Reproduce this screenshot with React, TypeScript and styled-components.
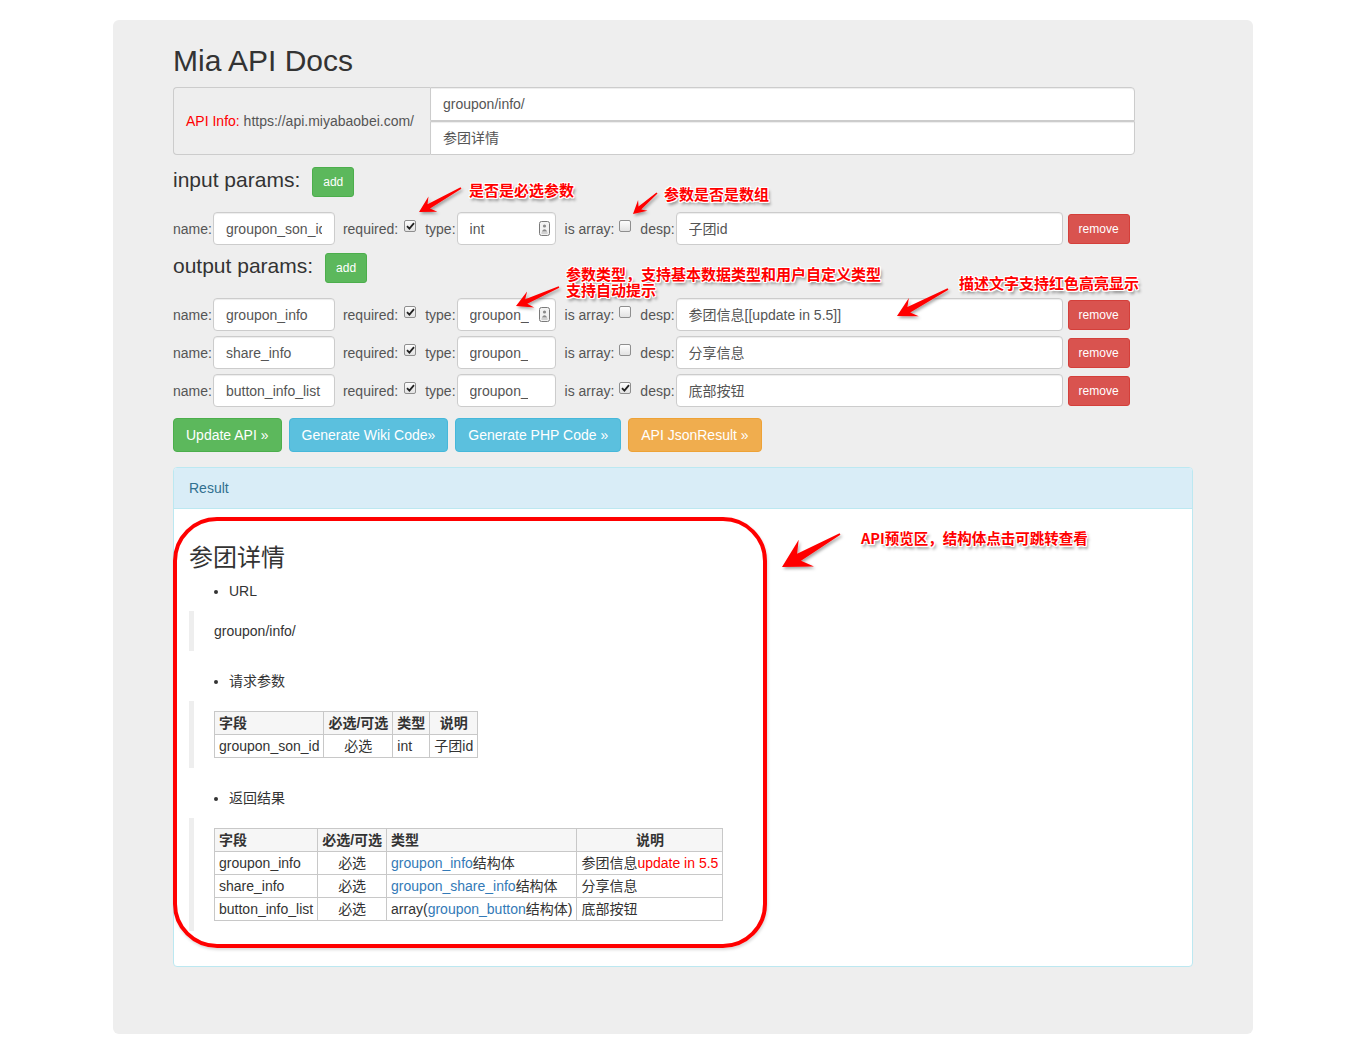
import React from "react";
import styled, { createGlobalStyle } from "styled-components";

const FONT = `"Liberation Sans", Arial, "Noto Sans CJK SC", sans-serif`;
const CJK_BOLD = `"Noto Sans CJK SC", "Liberation Sans", sans-serif`;

const GlobalStyle = createGlobalStyle`
  * { box-sizing: border-box; }
  html, body { margin: 0; padding: 0; background: #fff; }
  body {
    font-family: ${FONT};
    font-size: 14px;
    line-height: 20px;
    color: #333;
  }
`;

const Page = styled.div`
  padding: 20px 0 31px;
`;

const Jumbotron = styled.div`
  position: relative;
  width: 1140px;
  margin: 0 auto;
  padding: 24px 60px 47px;
  background: #eee;
  border-radius: 6px;
`;

const Title = styled.h1`
  margin: 0 0 10px;
  font-size: 30px;
  line-height: 33px;
  font-weight: 400;
  color: #333;
`;

const InfoGroup = styled.div`
  display: flex;
  width: 962px;
`;

const InfoAddon = styled.div`
  width: 257px;
  display: flex;
  align-items: center;
  padding: 6px 12px;
  background: #eee;
  border: 1px solid #ccc;
  border-right: 0;
  border-radius: 4px 0 0 4px;
  color: #555;
  white-space: nowrap;
`;

const Red = styled.span`
  color: #f00;
`;

const InfoFields = styled.div`
  flex: 1;
  display: flex;
  flex-direction: column;
`;

const InfoField = styled.div<{ $pos: "top" | "bottom" }>`
  height: 34px;
  padding: 6px 12px;
  background: #fff;
  border: 1px solid #ccc;
  color: #555;
  box-shadow: inset 0 1px 1px rgba(0, 0, 0, 0.075);
  border-radius: ${(p) => (p.$pos === "top" ? "0 4px 0 0" : "0 0 4px 0")};
`;

const SectionHead = styled.div<{ $top: number }>`
  display: flex;
  align-items: flex-start;
  margin-top: ${(p) => p.$top}px;
`;

const SectionTitle = styled.h3`
  margin: 0 12px 0 0;
  font-size: 21px;
  line-height: 26px;
  font-weight: 400;
  color: #333;
`;

const variants = {
  success: ["#5cb85c", "#4cae4c"],
  info: ["#5bc0de", "#46b8da"],
  warning: ["#f0ad4e", "#eea236"],
  danger: ["#d9534f", "#d43f3a"],
} as const;

type Variant = keyof typeof variants;

const Btn = styled.button<{ $variant: Variant; $sm?: boolean; $ml?: number }>`
  font-family: ${FONT};
  color: #fff;
  background: ${(p) => variants[p.$variant][0]};
  border: 1px solid ${(p) => variants[p.$variant][1]};
  border-radius: ${(p) => (p.$sm ? "3px" : "4px")};
  padding: ${(p) => (p.$sm ? "5px 10px" : "6px 12px")};
  font-size: ${(p) => (p.$sm ? "12px" : "14px")};
  line-height: ${(p) => (p.$sm ? "18px" : "20px")};
  margin-left: ${(p) => p.$ml ?? 0}px;
  white-space: nowrap;
  cursor: pointer;
`;

const ParamRows = styled.div<{ $top: number }>`
  display: flex;
  flex-direction: column;
  gap: 5px;
  margin-top: ${(p) => p.$top}px;
`;

const Row = styled.div`
  display: flex;
  align-items: center;
  height: 33px;
`;

const Label = styled.span<{ $ml?: number }>`
  color: #555;
  margin-left: ${(p) => p.$ml ?? 0}px;
  margin-right: 1px;
  white-space: nowrap;
`;

const Field = styled.div<{ $w: number; $pr?: number }>`
  width: ${(p) => p.$w}px;
  height: 33px;
  display: flex;
  align-items: center;
  padding: 0 ${(p) => p.$pr ?? 12}px 0 12px;
  background: #fff;
  border: 1px solid #ccc;
  border-radius: 4px;
  color: #555;
  box-shadow: inset 0 1px 1px rgba(0, 0, 0, 0.075);
`;

const FieldText = styled.span<{ $mr?: number }>`
  flex: 1;
  min-width: 0;
  overflow: hidden;
  white-space: nowrap;
  margin-right: ${(p) => p.$mr ?? 0}px;
`;

const Check = styled.span<{ $ml: number }>`
  width: 12px;
  height: 12px;
  flex: none;
  margin-left: ${(p) => p.$ml}px;
  margin-bottom: 5px;
  border: 1px solid #8e8e8e;
  border-radius: 2px;
  background: linear-gradient(#fdfdfd, #e2e2e2);
  display: inline-flex;
  align-items: center;
  justify-content: center;
`;

const ActionBar = styled.div`
  display: flex;
  gap: 7px;
  margin-top: 11px;
`;

const Panel = styled.div`
  margin-top: 15px;
  margin-bottom: 20px;
  background: #fff;
  border: 1px solid #bce8f1;
  border-radius: 4px;
`;

const PanelHeading = styled.div`
  padding: 10px 15px;
  background: #d9edf7;
  color: #31708f;
  border-bottom: 1px solid #bce8f1;
  border-radius: 3px 3px 0 0;
`;

const PanelBody = styled.div`
  padding: 15px;
`;

const DocTitle = styled.h2`
  margin: 20px 0 10px;
  font-size: 24px;
  line-height: 27px;
  font-weight: 400;
  color: #333;
`;

const BulletList = styled.ul`
  margin: 0 0 10px;
  padding-left: 40px;
  list-style: disc;
`;

const Quote = styled.blockquote`
  margin: 0 0 20px;
  padding: 10px 20px;
  border-left: 5px solid #eee;
`;

const Table = styled.table`
  border-collapse: collapse;
  border-spacing: 0;
`;

const Th = styled.th<{ $center?: boolean }>`
  padding: 1px 4px;
  border: 1px solid #c8c8c8;
  background: #f6f6f6;
  font-weight: 700;
  text-align: ${(p) => (p.$center ? "center" : "left")};
  white-space: nowrap;
`;

const Td = styled.td<{ $center?: boolean }>`
  padding: 1px 4px;
  border: 1px solid #c8c8c8;
  text-align: ${(p) => (p.$center ? "center" : "left")};
  white-space: nowrap;
`;

const Link = styled.a`
  color: #337ab7;
  text-decoration: none;
`;

const Hot = styled.span`
  color: #f00;
`;

/* ---------- annotation overlay ---------- */

const Overlay = styled.div`
  position: absolute;
  inset: 0;
  pointer-events: none;
`;

const ArrowLayer = styled.svg`
  position: absolute;
  left: 0;
  top: 0;
  width: 100%;
  height: 100%;
  overflow: visible;
`;

const Note = styled.div<{ $x: number; $y: number; $size?: number }>`
  position: absolute;
  left: ${(p) => p.$x}px;
  top: ${(p) => p.$y}px;
  font-family: ${CJK_BOLD};
  font-weight: 700;
  font-size: ${(p) => p.$size ?? 15}px;
  line-height: 16px;
  color: #f00;
  white-space: nowrap;
  text-shadow: -1px -1px 0 #fff, 1px -1px 0 #fff, -1px 1px 0 #fff, 1px 1px 0 #fff,
    0 -1px 0 #fff, 0 1px 0 #fff, -1px 0 0 #fff, 1px 0 0 #fff,
    2px 3px 3px rgba(0, 0, 0, 0.45);
`;

const Frame = styled.div`
  position: absolute;
  left: 60px;
  top: 497px;
  width: 594px;
  height: 431px;
  border: 4px solid #f00;
  border-radius: 44px;
  box-shadow: 1px 2px 3px rgba(0, 0, 0, 0.15);
`;

type Pt = [number, number];

function arrowPoints(tail: Pt, tip: Pt, head: number, shaft: number): string {
  const dx = tip[0] - tail[0];
  const dy = tip[1] - tail[1];
  const len = Math.hypot(dx, dy);
  const ux = dx / len;
  const uy = dy / len;
  const nx = -uy;
  const ny = ux;
  const bx = tip[0] - ux * head;
  const by = tip[1] - uy * head;
  const jx = tip[0] - ux * head * 0.7;
  const jy = tip[1] - uy * head * 0.7;
  const hw = head * 0.55;
  const sw = shaft / 2;
  const tw = 0.8;
  const pts: Pt[] = [
    [tail[0] + nx * tw, tail[1] + ny * tw],
    [jx + nx * sw, jy + ny * sw],
    [bx + nx * hw, by + ny * hw],
    tip,
    [bx - nx * hw, by - ny * hw],
    [jx - nx * sw, jy - ny * sw],
    [tail[0] - nx * tw, tail[1] - ny * tw],
  ];
  return pts.map((p) => `${p[0].toFixed(1)},${p[1].toFixed(1)}`).join(" ");
}

const arrows: { tail: Pt; tip: Pt; head: number; shaft: number }[] = [
  { tail: [348, 168], tip: [306, 192], head: 16, shaft: 5 },
  { tail: [544, 173], tip: [520, 194], head: 13, shaft: 4 },
  { tail: [446, 267], tip: [403, 286], head: 16, shaft: 5 },
  { tail: [835, 269], tip: [784, 296], head: 19, shaft: 6 },
  { tail: [727, 514], tip: [669, 547], head: 28, shaft: 8 },
];

/* ---------- small drawings ---------- */

const CheckMark = () => (
  <svg width="9" height="8" viewBox="0 0 9 8">
    <path d="M1 4.2 L3.4 6.6 L8 1.2" fill="none" stroke="#222" strokeWidth="1.8" />
  </svg>
);

const AutoIcon = () => (
  <svg width="11" height="15" viewBox="0 0 11 15">
    <rect x="0.5" y="0.5" width="10" height="14" rx="2" fill="#f2f2f2" stroke="#7a7a7a" />
    <circle cx="5.5" cy="5" r="1.6" fill="#8a8a8a" />
    <path d="M2.8 10.5 Q5.5 6 8.2 10.5 Z" fill="#8a8a8a" />
    <rect x="2.5" y="11.5" width="6" height="1" fill="#b0b0b0" />
  </svg>
);

/* ---------- data ---------- */

type Param = {
  name: string;
  required: boolean;
  type: string;
  auto?: boolean;
  array: boolean;
  desp: string;
};

const inputParams: Param[] = [
  { name: "groupon_son_id", required: true, type: "int", auto: true, array: false, desp: "子团id" },
];

const outputParams: Param[] = [
  { name: "groupon_info", required: true, type: "groupon_info", auto: true, array: false, desp: "参团信息[[update in 5.5]]" },
  { name: "share_info", required: true, type: "groupon_share_info", array: false, desp: "分享信息" },
  { name: "button_info_list", required: true, type: "groupon_button", array: true, desp: "底部按钮" },
];

const ParamRow = ({ p }: { p: Param }) => (
  <Row>
    <Label>name:</Label>
    <Field $w={122}>
      <FieldText>{p.name}</FieldText>
    </Field>
    <Label $ml={8}>required:</Label>
    <Check $ml={5}>{p.required && <CheckMark />}</Check>
    <Label $ml={9}>type:</Label>
    <Field $w={99} $pr={p.auto ? 5 : 27}>
      <FieldText $mr={p.auto ? 10 : 0}>{p.type}</FieldText>
      {p.auto && <AutoIcon />}
    </Field>
    <Label $ml={9}>is array:</Label>
    <Check $ml={4}>{p.array && <CheckMark />}</Check>
    <Label $ml={9}>desp:</Label>
    <Field $w={387}>
      <FieldText>{p.desp}</FieldText>
    </Field>
    <Btn $variant="danger" $sm $ml={5}>remove</Btn>
  </Row>
);

export default function App() {
  return (
    <>
      <GlobalStyle />
      <Page>
        <Jumbotron>
          <Title>Mia API Docs</Title>
          <InfoGroup>
            <InfoAddon>
              <Red>API Info:</Red>&nbsp;https://api.miyabaobei.com/
            </InfoAddon>
            <InfoFields>
              <InfoField $pos="top">groupon/info/</InfoField>
              <InfoField $pos="bottom">参团详情</InfoField>
            </InfoFields>
          </InfoGroup>

          <SectionHead $top={12}>
            <SectionTitle>input params:</SectionTitle>
            <Btn $variant="success" $sm>add</Btn>
          </SectionHead>
          <ParamRows $top={15}>
            {inputParams.map((p) => (
              <ParamRow key={p.name} p={p} />
            ))}
          </ParamRows>

          <SectionHead $top={8}>
            <SectionTitle>output params:</SectionTitle>
            <Btn $variant="success" $sm>add</Btn>
          </SectionHead>
          <ParamRows $top={15}>
            {outputParams.map((p) => (
              <ParamRow key={p.name} p={p} />
            ))}
          </ParamRows>

          <ActionBar>
            <Btn $variant="success">Update API »</Btn>
            <Btn $variant="info">Generate Wiki Code»</Btn>
            <Btn $variant="info">Generate PHP Code »</Btn>
            <Btn $variant="warning">API JsonResult »</Btn>
          </ActionBar>

          <Panel>
            <PanelHeading>Result</PanelHeading>
            <PanelBody>
              <DocTitle>参团详情</DocTitle>
              <BulletList>
                <li>URL</li>
              </BulletList>
              <Quote>groupon/info/</Quote>
              <BulletList>
                <li>请求参数</li>
              </BulletList>
              <Quote>
                <Table>
                  <thead>
                    <tr>
                      <Th>字段</Th>
                      <Th>必选/可选</Th>
                      <Th>类型</Th>
                      <Th $center>说明</Th>
                    </tr>
                  </thead>
                  <tbody>
                    <tr>
                      <Td>groupon_son_id</Td>
                      <Td $center>必选</Td>
                      <Td>int</Td>
                      <Td>子团id</Td>
                    </tr>
                  </tbody>
                </Table>
              </Quote>
              <BulletList>
                <li>返回结果</li>
              </BulletList>
              <Quote>
                <Table>
                  <thead>
                    <tr>
                      <Th>字段</Th>
                      <Th>必选/可选</Th>
                      <Th>类型</Th>
                      <Th $center>说明</Th>
                    </tr>
                  </thead>
                  <tbody>
                    <tr>
                      <Td>groupon_info</Td>
                      <Td $center>必选</Td>
                      <Td>
                        <Link href="#groupon_info">groupon_info</Link>结构体
                      </Td>
                      <Td>
                        参团信息<Hot>update in 5.5</Hot>
                      </Td>
                    </tr>
                    <tr>
                      <Td>share_info</Td>
                      <Td $center>必选</Td>
                      <Td>
                        <Link href="#groupon_share_info">groupon_share_info</Link>结构体
                      </Td>
                      <Td>分享信息</Td>
                    </tr>
                    <tr>
                      <Td>button_info_list</Td>
                      <Td $center>必选</Td>
                      <Td>
                        array(<Link href="#groupon_button">groupon_button</Link>结构体)
                      </Td>
                      <Td>底部按钮</Td>
                    </tr>
                  </tbody>
                </Table>
              </Quote>
            </PanelBody>
          </Panel>

          <Overlay>
            <Frame />
            <ArrowLayer>
              <defs>
                <filter id="arrowShadow" x="-30%" y="-30%" width="160%" height="160%">
                  <feDropShadow dx="1.5" dy="2" stdDeviation="1.5" floodColor="#000" floodOpacity="0.35" />
                </filter>
              </defs>
              {arrows.map((a, i) => (
                <polygon
                  key={i}
                  points={arrowPoints(a.tail, a.tip, a.head, a.shaft)}
                  fill="#f00"
                  filter="url(#arrowShadow)"
                />
              ))}
            </ArrowLayer>
            <Note $x={356} $y={162}>是否是必选参数</Note>
            <Note $x={551} $y={166}>参数是否是数组</Note>
            <Note $x={453} $y={246}>
              参数类型，支持基本数据类型和用户自定义类型
              <br />
              支持自动提示
            </Note>
            <Note $x={846} $y={255}>描述文字支持红色高亮显示</Note>
            <Note $x={748} $y={510} $size={14.5}>API预览区，结构体点击可跳转查看</Note>
          </Overlay>
        </Jumbotron>
      </Page>
    </>
  );
}
